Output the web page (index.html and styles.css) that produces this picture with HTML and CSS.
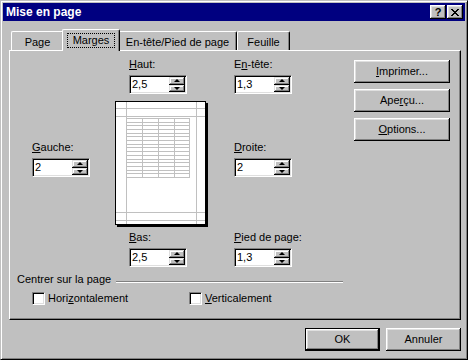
FILE: index.html
```html
<!DOCTYPE html>
<html lang="fr">
<head>
    <meta charset="UTF-8">
    <title>Mise en page</title>
    <link rel="stylesheet" href="styles.css">
</head>
<body>
    <div class="dialog">
        <div class="titlebar">
            <span class="title">Mise en page</span>
            <div class="title-buttons">
                <button class="title-btn help">?</button>
                <button class="title-btn close">
                    <svg width="8" height="7" viewBox="0 0 8 7">
                        <path d="M0 0h2v1H0zM6 0h2v1H6zM1 1h2v1H1zM5 1h2v1H5zM2 2h4v1H2zM3 3h2v1H3zM2 4h4v1H2zM1 5h2v1H1zM5 5h2v1H5zM0 6h2v1H0zM6 6h2v1H6z" fill="#000"/>
                    </svg>
                </button>
            </div>
        </div>

        <div class="dialog-body">
            <!-- Tabs -->
            <div class="tabs">
                <div class="tab tab-page">Page</div>
                <div class="tab tab-marges active"><span class="focus">Marges</span></div>
                <div class="tab tab-entete">En-tête/Pied de page</div>
                <div class="tab tab-feuille">Feuille</div>
            </div>

            <div class="panel">
                <div class="margins">
                    <div class="field field-top">
                        <label><u>H</u>aut:</label>
                        <div class="spin"><span class="spin-value">2,5</span><span class="arrows"><span class="arrow up"></span><span class="arrow down"></span></span></div>
                    </div>
                    <div class="field field-header">
                        <label>E<u>n</u>-tête:</label>
                        <div class="spin"><span class="spin-value">1,3</span><span class="arrows"><span class="arrow up"></span><span class="arrow down"></span></span></div>
                    </div>

                    <div class="side-buttons">
                        <button class="btn btn-side"><u>I</u>mprimer...</button>
                        <button class="btn btn-side">Ape<u>r</u>çu...</button>
                        <button class="btn btn-side"><u>O</u>ptions...</button>
                    </div>

                    <div class="field field-left">
                        <label><u>G</u>auche:</label>
                        <div class="spin"><span class="spin-value">2</span><span class="arrows"><span class="arrow up"></span><span class="arrow down"></span></span></div>
                    </div>

                    <svg class="preview" width="93" height="126" viewBox="0 0 93 126">
                        <rect x="2" y="2" width="91" height="124" fill="#000"/>
                        <rect x="0.5" y="0.5" width="90" height="123" fill="#fff" stroke="#000"/>
                        <g stroke="#c0c0c0" fill="none">
                            <!-- margins -->
                            <path d="M11.5 1V123M81.5 1V123M1 7.5H90M1 15.5H90M1 111.5H90M1 119.5H90"/>
                            <!-- cell grid -->
                            <path d="M27.5 17V77M43.5 17V77M59.5 17V77M74.5 17V77"/>
                            <path d="M11 17.5h64M11 21.5h64M11 24.5h64M11 28.5h64M11 32.5h64M11 35.5h64M11 39.5h64M11 43.5h64M11 46.5h64M11 50.5h64M11 54.5h64M11 58.5h64M11 61.5h64M11 65.5h64M11 69.5h64M11 72.5h64M11 76.5h64"/>
                        </g>
                    </svg>

                    <div class="field field-right">
                        <label><u>D</u>roite:</label>
                        <div class="spin"><span class="spin-value">2</span><span class="arrows"><span class="arrow up"></span><span class="arrow down"></span></span></div>
                    </div>

                    <div class="field field-bottom">
                        <label><u>B</u>as:</label>
                        <div class="spin"><span class="spin-value">2,5</span><span class="arrows"><span class="arrow up"></span><span class="arrow down"></span></span></div>
                    </div>
                    <div class="field field-footer">
                        <label><u>P</u>ied de page:</label>
                        <div class="spin"><span class="spin-value">1,3</span><span class="arrows"><span class="arrow up"></span><span class="arrow down"></span></span></div>
                    </div>
                </div>

                <div class="center-group">
                    <div class="group-title"><span>Centrer sur la page</span><span class="etch"></span></div>
                    <div class="checks">
                        <div class="check"><span class="checkbox"></span><span>Hori<u>z</u>ontalement</span></div>
                        <div class="check"><span class="checkbox"></span><span><u>V</u>erticalement</span></div>
                    </div>
                </div>
            </div>

            <div class="actions">
                <button class="btn btn-action default">OK</button>
                <button class="btn btn-action">Annuler</button>
            </div>
        </div>
    </div>
</body>
</html>
```

FILE: styles.css
```css
* {
    box-sizing: border-box;
}

html, body {
    margin: 0;
    padding: 0;
}

body {
    font-family: "Liberation Sans", Arial, sans-serif;
    font-size: 11px;
    line-height: 13px;
    color: #000;
    background: #c0c0c0;
}

u {
    text-decoration: underline;
    text-underline-offset: 1px;
}

/* ===== Window frame ===== */

.dialog {
    width: 468px;
    height: 360px;
    background: #c0c0c0;
    border: 1px solid;
    border-color: #c0c0c0 #000 #000 #c0c0c0;
    box-shadow: inset 1px 1px #fff, inset -1px -1px #808080;
    padding: 2px;
}

.titlebar {
    height: 18px;
    background: #000080;
    color: #fff;
    display: flex;
    align-items: center;
    justify-content: space-between;
    padding: 0 2px 0 3px;
}

.title {
    font-weight: bold;
    font-size: 12px;
}

.title-buttons {
    display: flex;
    gap: 1px;
}

.title-btn {
    width: 16px;
    height: 14px;
    padding: 0;
    border: 0;
    background: #c0c0c0;
    box-shadow: inset -1px -1px #000, inset 1px 1px #fff, inset -2px -2px #808080, inset 2px 2px #dfdfdf;
    display: flex;
    align-items: center;
    justify-content: center;
    font-family: inherit;
    font-weight: bold;
    font-size: 11px;
    line-height: 12px;
    color: #000;
}

.close svg {
    display: block;
    margin-left: -1px;
}

/* ===== Body ===== */

.dialog-body {
    padding: 8px 4px 0 6px;
}

.tabs {
    display: flex;
    align-items: flex-end;
    height: 21px;
    padding-left: 2px;
}

.tab {
    height: 19px;
    padding-top: 4px;
    text-align: center;
    border: 1px solid #fff;
    border-bottom: 0;
    border-right-color: #000;
    border-radius: 2px 2px 0 0;
    box-shadow: inset -1px 0 #808080;
    background: #c0c0c0;
    white-space: nowrap;
}

.tab-page { width: 53px; }
.tab-marges { width: 54px; }
.tab-entete { width: 119px; }
.tab-feuille { width: 53px; }

.tab.active {
    width: 58px;
    height: 22px;
    margin: 0 -2px -1px;
    padding-top: 3px;
    position: relative;
    z-index: 1;
}

.focus {
    display: inline-block;
    border: 1px dotted #000;
    padding: 0 5px;
    line-height: 13px;
}

.panel {
    height: 270px;
    border: 1px solid;
    border-color: #fff #000 #000 #fff;
    box-shadow: inset -1px -1px #808080;
    padding: 7px 0 0 7px;
}

/* ===== Margins layout ===== */

.margins {
    margin-left: 15px;
    display: grid;
    grid-template-columns: 83px 119px 120px 96px;
    grid-template-rows: 43px 130px 37px;
    align-items: start;
}

.field label {
    display: block;
    height: 17px;
}

.field-top { grid-column: 2; grid-row: 1; margin-left: 14px; }
.field-header { grid-column: 3; grid-row: 1; }
.field-left { grid-column: 1; grid-row: 2; margin-top: 40px; }
.field-right { grid-column: 3; grid-row: 2; margin-top: 40px; }
.field-bottom { grid-column: 2; grid-row: 3; margin-left: 14px; }
.field-footer { grid-column: 3; grid-row: 3; }

.preview {
    grid-column: 2;
    grid-row: 2;
    display: block;
}

.side-buttons {
    grid-column: 4;
    grid-row: 1 / 3;
    margin-top: 2px;
    display: flex;
    flex-direction: column;
    gap: 6px;
}

.spin {
    width: 58px;
    height: 19px;
    display: flex;
    background: #fff;
    border: 1px solid;
    border-color: #808080 #fff #fff #808080;
    box-shadow: inset 1px 1px #000, inset -1px -1px #dfdfdf;
    padding: 1px;
}

.spin-value {
    flex: 1;
    line-height: 15px;
    padding-left: 1px;
}

.arrows {
    width: 16px;
    display: flex;
    flex-direction: column;
}

.arrow {
    background: #c0c0c0;
    box-shadow: inset -1px -1px #000, inset 1px 1px #dfdfdf, inset -2px -2px #808080, inset 2px 2px #fff;
    display: flex;
    align-items: center;
    justify-content: center;
}

.arrow.up { height: 8px; }
.arrow.down { height: 7px; }

.arrow::before {
    content: "";
    width: 0;
    height: 0;
    border-left: 3px solid transparent;
    border-right: 3px solid transparent;
}

.arrow.up::before {
    border-bottom: 3px solid #000;
    margin-top: -1px;
}

.arrow.down::before {
    border-top: 3px solid #000;
    margin-top: -1px;
}

/* ===== Buttons ===== */

.btn {
    font-family: inherit;
    font-size: 11px;
    line-height: 13px;
    color: #000;
    background: #c0c0c0;
    border: 0;
    padding: 0;
    box-shadow: inset -1px -1px #000, inset 1px 1px #fff, inset -2px -2px #808080, inset 2px 2px #dfdfdf;
}

.btn-side {
    width: 96px;
    height: 23px;
}

.btn-action {
    width: 75px;
    height: 23px;
}

.btn.default {
    border: 1px solid #000;
}

/* ===== Centre group ===== */

.center-group {
    margin-top: 5px;
    width: 326px;
}

.group-title {
    display: flex;
    align-items: flex-start;
}

.etch {
    flex: 1;
    height: 2px;
    margin: 8px 0 0 5px;
    border-top: 1px solid #808080;
    border-bottom: 1px solid #fff;
}

.checks {
    margin: 6px 0 0 15px;
    display: grid;
    grid-template-columns: 157px auto;
}

.check {
    display: flex;
    align-items: center;
    gap: 3px;
}

.checkbox {
    width: 13px;
    height: 13px;
    background: #fff;
    border: 1px solid;
    border-color: #808080 #fff #fff #808080;
    box-shadow: inset 1px 1px #000, inset -1px -1px #dfdfdf;
}

.actions {
    margin-top: 8px;
    display: flex;
    justify-content: flex-end;
    gap: 6px;
}
```
